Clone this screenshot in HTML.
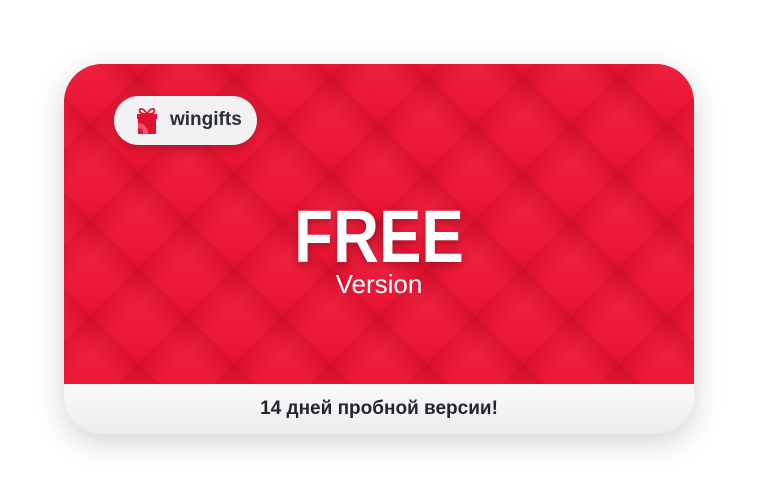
<!DOCTYPE html>
<html><head><meta charset="utf-8"><style>
html,body{margin:0;padding:0;background:#fff;width:758px;height:498px;overflow:hidden;font-family:"Liberation Sans",sans-serif}
.card{position:absolute;left:64px;top:64px;width:630px;height:370px;border-radius:38px;overflow:hidden;box-shadow:0 8px 30px rgba(0,0,0,.18);background:#f3f3f4}
.red{position:absolute;left:0;top:0;width:630px;height:320px;background:#e8112f;overflow:hidden}
.pat{position:absolute;inset:0;
background:
repeating-linear-gradient(45deg,rgba(255,60,90,0) 0px,rgba(255,70,100,.16) 40px,rgba(120,0,20,.13) 67px,rgba(255,60,90,0) 68px),
repeating-linear-gradient(-45deg,rgba(255,60,90,0) 0px,rgba(255,80,110,.12) 40px,rgba(110,0,20,.12) 67px,rgba(255,60,90,0) 68px);}
.bar{position:absolute;left:0;top:320px;width:630px;height:50px;background:linear-gradient(#fafafa,#ececee);text-align:center;line-height:50px;font-weight:bold;font-size:19px;color:#23262f}
.badge{position:absolute;left:50px;top:32px;width:143px;height:49px;border-radius:25px;background:#f2f2f4;box-shadow:0 4px 10px rgba(0,0,0,.2)}
.badge span{position:absolute;left:56px;top:13px;font-size:19px;font-weight:bold;color:#2a2e3a}
.free{position:absolute;left:0;width:630px;text-align:center;top:130px;font-size:74px;font-weight:900;color:#fff;text-shadow:0 3px 8px rgba(0,0,0,.25);transform:scaleX(0.86)}
.ver{position:absolute;left:0;width:630px;text-align:center;top:205px;font-size:26px;color:#fff}
</style></head><body>
<div class="card">
<div class="red"><div class="pat"></div>
<div class="badge">
<svg style="position:absolute;left:20px;top:9px" width="26" height="30" viewBox="0 0 26 30">
<path d="M13 9 C9 2 4 3 6 7 C7 9 11 9 13 9 C15 9 19 9 20 7 C22 3 17 2 13 9Z" fill="none" stroke="#e4102f" stroke-width="1.8"/>
<rect x="3" y="9" width="20" height="5" fill="#e4102f"/>
<rect x="4" y="14" width="18" height="15" fill="#e4102f"/>
<path d="M4 18 A10 10 0 0 1 14 29 L9 29 A5 5 0 0 0 4 23Z" fill="#f0506a"/>
</svg>
<span>wingifts</span></div>
<div class="free">FREE</div>
<div class="ver">Version</div>
</div>
<div class="bar">14 дней пробной версии!</div>
</div>
</body></html>
